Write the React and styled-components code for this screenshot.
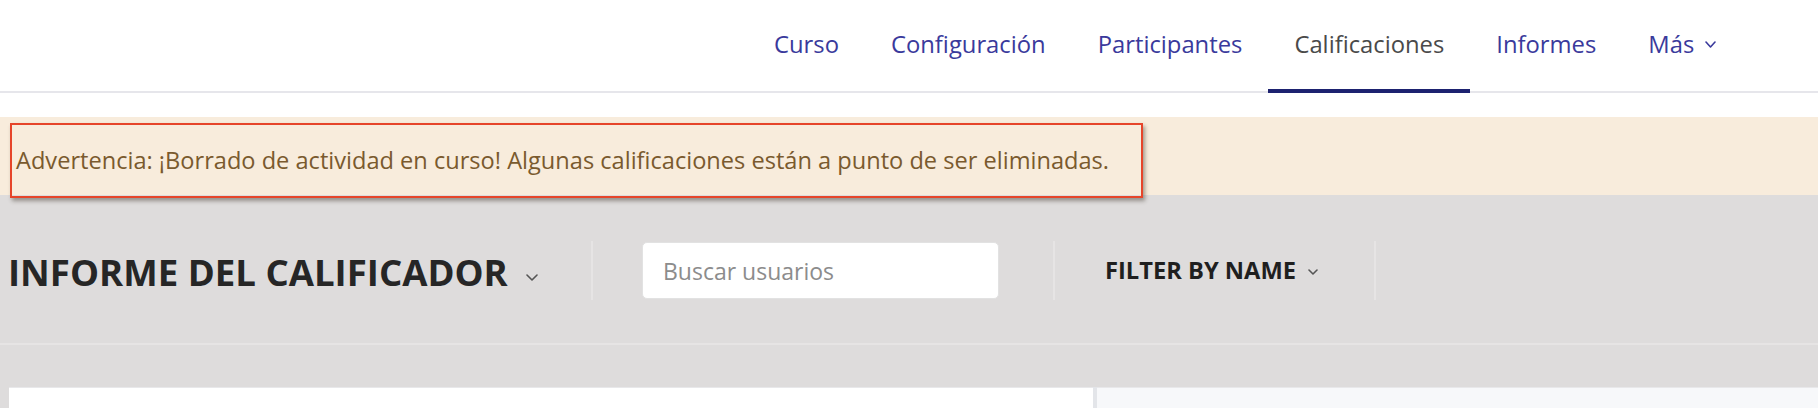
import React from "react";
import styled, { createGlobalStyle } from "styled-components";

const GlobalStyle = createGlobalStyle`
  html, body { margin: 0; padding: 0; background: #ffffff; }
  body { font-family: "Open Sans", "Noto Sans", sans-serif; }
  * { box-sizing: border-box; }
`;

const Page = styled.div`
  width: 1818px;
  height: 408px;
  overflow: hidden;
  background: #ffffff;
`;

const Header = styled.nav`
  height: 93px;
  display: flex;
  align-items: stretch;
  padding-left: 748px;
  border-bottom: 2px solid #e6e6eb;
`;

const NavItem = styled.a`
  display: flex;
  align-items: center;
  gap: 11px;
  padding: 0 26px;
  margin-bottom: -2px;
  border-bottom: 4px solid ${(p) => (p.$active ? "#1d2270" : "transparent")};
  font-size: 23.8px;
  line-height: 1.2;
  color: ${(p) => (p.$active ? "#4a4a4a" : "#3a3a9c")};
  text-decoration: none;
  white-space: nowrap;
`;

const BannerArea = styled.div`
  margin-top: 24px;
  height: 78px;
  background: #f8ecdc;
  padding: 6px 0 0 10px;
`;

const Highlight = styled.div`
  position: relative;
  z-index: 1;
  width: 1133px;
  height: 75px;
  border: 2px solid #e6452a;
  box-shadow: 2px 3px 4px rgba(60, 50, 40, 0.45);
  display: flex;
  align-items: center;
  padding-left: 4px;
  font-size: 23.6px;
  line-height: 1.2;
  color: #7a5a2e;
  white-space: nowrap;
`;

const GraySection = styled.section`
  background: #dedcdc;
`;

const Toolbar = styled.div`
  display: flex;
  align-items: stretch;
  height: 148px;
  padding: 46px 0 43px;
`;

const Cell = styled.div`
  display: flex;
  align-items: center;
  border-right: 2px solid #e6e4e4;
`;

const TitleCell = styled(Cell)`
  width: 593px;
  padding-left: 8px;
  gap: 18px;
`;

const SearchCell = styled(Cell)`
  padding: 0 54px 0 49px;
`;

const FilterCell = styled(Cell)`
  width: 321px;
  padding-left: 50px;
  gap: 12px;
`;

const Title = styled.h1`
  margin: 4px 0 0;
  font-size: 36.6px;
  font-weight: 700;
  line-height: 1.2;
  color: #262626;
  white-space: nowrap;
`;

const FilterLabel = styled.span`
  font-size: 23.7px;
  font-weight: 700;
  line-height: 1.2;
  color: #1f1f1f;
  white-space: nowrap;
`;

const SearchInput = styled.input`
  width: 357px;
  height: 57px;
  border: 1px solid #e2e2e2;
  border-radius: 5px;
  background: #ffffff;
  padding: 0 0 0 20px;
  font-family: "Open Sans", "Noto Sans", sans-serif;
  font-size: 23px;
  color: #333;
  outline: none;
  &::placeholder {
    color: #8c8c8c;
  }
`;

const ChevronSvg = styled.svg`
  flex: none;
  margin-top: ${(p) => p.$drop || 0}px;
`;

const Chevron = ({ w = 11, h = 6, color = "#555", drop }) => (
  <ChevronSvg $drop={drop} width={w + 2} height={h + 2} viewBox={`0 0 ${w + 2} ${h + 2}`}>
    <polyline
      points={`1,1 ${(w + 2) / 2},${h + 1} ${w + 1},1`}
      fill="none"
      stroke={color}
      strokeWidth="1.6"
      strokeLinecap="round"
      strokeLinejoin="round"
    />
  </ChevronSvg>
);

const Rule = styled.div`
  height: 2px;
  background: #e6e4e4;
`;

const LowerGap = styled.div`
  height: 42px;
`;

const ContentRow = styled.div`
  display: flex;
  height: 21px;
  padding-left: 9px;
`;

const MainPanel = styled.div`
  width: 1084px;
  background: #ffffff;
  border-top: 1px solid #e8e8ea;
`;

const PanelDivider = styled.div`
  width: 4px;
  background: #e3e5e9;
`;

const SidePanel = styled.div`
  flex: 1;
  background: #f7f8fa;
  border-top: 1px solid #e8e8ea;
`;

const navItems = [
  { label: "Curso" },
  { label: "Configuración" },
  { label: "Participantes" },
  { label: "Calificaciones", active: true },
  { label: "Informes" },
  { label: "Más", dropdown: true },
];

export default function App() {
  return (
    <Page>
      <GlobalStyle />
      <Header>
        {navItems.map((item) => (
          <NavItem key={item.label} $active={item.active}>
            {item.label}
            {item.dropdown && <Chevron w={9} h={5} color="#3a3a9c" drop={0} />}
          </NavItem>
        ))}
      </Header>
      <BannerArea>
        <Highlight>
          Advertencia: ¡Borrado de actividad en curso! Algunas calificaciones están a punto de ser eliminadas.
        </Highlight>
      </BannerArea>
      <GraySection>
        <Toolbar>
          <TitleCell>
            <Title>INFORME DEL CALIFICADOR</Title>
            <Chevron w={10} h={5} color="#555" drop={14} />
          </TitleCell>
          <SearchCell>
            <SearchInput placeholder="Buscar usuarios" />
          </SearchCell>
          <FilterCell>
            <FilterLabel>FILTER BY NAME</FilterLabel>
            <Chevron w={8} h={4} color="#555" drop={2} />
          </FilterCell>
        </Toolbar>
        <Rule />
        <LowerGap />
        <ContentRow>
          <MainPanel />
          <PanelDivider />
          <SidePanel />
        </ContentRow>
      </GraySection>
    </Page>
  );
}
